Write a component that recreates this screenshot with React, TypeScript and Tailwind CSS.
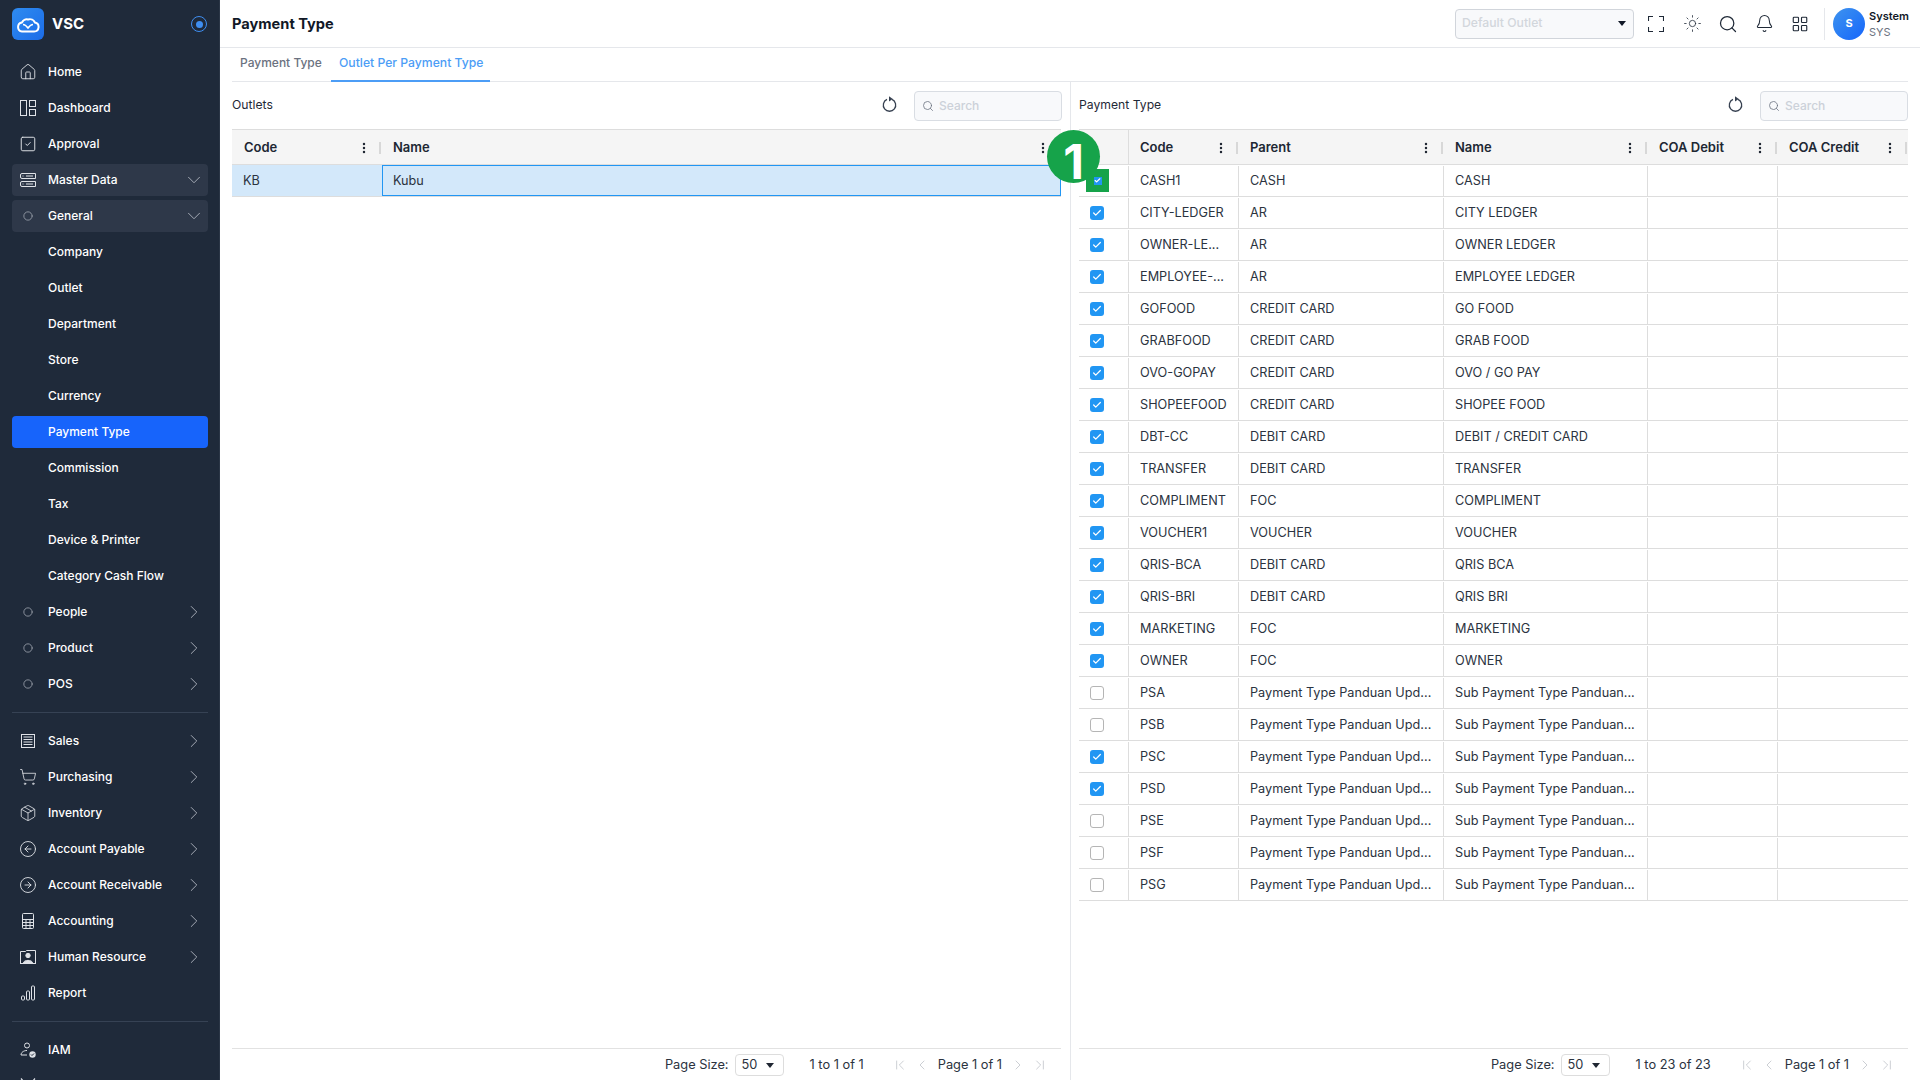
import {
  ChevronDown,
  ChevronRight,
  ChevronLeft,
  ChevronFirst,
  ChevronLast,
  Circle,
  Home,
  SquareCheck,
  ShoppingCart,
  Package,
  CircleArrowLeft,
  CircleArrowRight,
  Sun,
  Search,
  Bell,
  LayoutGrid,
  EllipsisVertical,
  Check,
} from "lucide-react";

const font = "font-['Inter','Liberation_Sans',sans-serif]";
const navIcon = "w-[18px] h-[18px] shrink-0";

function DashboardIcon() {
  return (
    <svg width="16" height="16" viewBox="0 0 16 16" fill="none" stroke="currentColor" strokeWidth="1">
      <rect x="0.5" y="0.5" width="6" height="15" />
      <rect x="9.5" y="0.5" width="6" height="6" />
      <rect x="9.5" y="9.5" width="6" height="6" />
    </svg>
  );
}

function ServerIcon() {
  return (
    <svg width="16" height="16" viewBox="0 0 16 16" fill="none" stroke="currentColor" strokeWidth="1">
      <path d="M2 1.500h13.500v5H2a1.500 1.500 0 0 1-1.500-1.500V3A1.500 1.500 0 0 1 2 1.500z" />
      <path d="M2 9.500h13.500v5H2A1.500 1.500 0 0 1 .5 13v-2A1.500 1.500 0 0 1 2 9.500z" />
      <path d="M2.500 4h1M2.500 12h1M6 4h7M6 12h7" />
    </svg>
  );
}

function SalesIcon() {
  return (
    <svg width="16" height="16" viewBox="0 0 16 16" fill="none" stroke="currentColor" strokeWidth="1">
      <rect x="1.500" y="1.500" width="13" height="13" />
      <path d="M3.500 4h9M3.500 6.500h9M3.500 9h9M3.500 11.500h9" />
    </svg>
  );
}

function CalcIcon() {
  return (
    <svg width="16" height="16" viewBox="0 0 16 16" fill="none" stroke="currentColor" strokeWidth="1">
      <rect x="2.500" y="0.500" width="11" height="15" rx="1" />
      <path d="M2.500 6.500h11M2.500 9.500h11M2.500 12.500h11M6 6.500v9M10 6.500v9" />
    </svg>
  );
}

function HrIcon() {
  return (
    <svg width="16" height="16" viewBox="0 0 16 16" fill="none" stroke="currentColor" strokeWidth="1">
      <path d="M.5 14.500v-12h5l1-1h9v13" />
      <path d="M0 14.500h16" />
      <circle cx="8" cy="6.500" r="2.200" fill="currentColor" />
      <path d="M3.500 14c0-3.500 9-3.500 9 0z" fill="currentColor" />
    </svg>
  );
}

function ReportIcon() {
  return (
    <svg width="16" height="16" viewBox="0 0 16 16" fill="none" stroke="currentColor" strokeWidth="1">
      <rect x="1.500" y="11" width="3" height="4" rx="1" />
      <rect x="6.500" y="6" width="3" height="9" rx="1" />
      <rect x="11.500" y="1" width="3" height="14" rx="1" />
    </svg>
  );
}

function IamIcon() {
  return (
    <svg width="16" height="16" viewBox="0 0 16 16" fill="none" stroke="currentColor" strokeWidth="1">
      <circle cx="7" cy="3.500" r="2.500" />
      <path d="M1 13h6M1 13c0-2.500 2.500-4.500 6-4.500" />
      <circle cx="12.500" cy="12.500" r="3.200" fill="currentColor" stroke="none" />
      <path d="M11 12.500l1 1 2-2" stroke="#1f2a3a" />
    </svg>
  );
}

function ToolsIcon() {
  return (
    <svg width="16" height="16" viewBox="0 0 16 16" fill="none" stroke="currentColor" strokeWidth="1.200">
      <path d="M1 .5l6 7M15 .5l-6 7M3 8l10 7M13 8L3 15" />
    </svg>
  );
}

function FullscreenIcon() {
  return (
    <svg width="16" height="16" viewBox="0 0 16 16" fill="none" stroke="currentColor" strokeWidth="1.100">
      <path d="M0.500 5V0.500H5M11 0.500H15.500V5M15.500 11V15.500H11M5 15.500H0.500V11" />
    </svg>
  );
}

function RefreshIcon() {
  return (
    <svg width="15" height="16" viewBox="0 0 15 16" fill="none" className="mr-[17px] -mt-[3px] shrink-0 text-[#374151]">
      <path d="M5 3.400a6.200 6.200 0 1 0 5 0" stroke="currentColor" strokeWidth="1.300" />
      <path d="M7 .2l3.800 2.700L7 5.400z" fill="currentColor" />
    </svg>
  );
}

function Logo() {
  return (
    <div className="w-8 h-8 rounded-md bg-gradient-to-br from-[#2f8bf0] to-[#1c6ce8] flex items-center justify-center shrink-0">
      <svg width="24" height="18" viewBox="0 0 24 18" fill="none" stroke="white" strokeWidth="2">
        <path d="M6 16.500h12a4.500 4.500 0 0 0 1-8.900A5.500 5.500 0 0 0 12 4.500 5 5 0 0 0 6 7.400a4.600 4.600 0 0 0 0 9.100z" />
        <path d="M7 9.500c2 0 3.500 1.500 5 3.500 1.500-2 3-3.500 5-3.500" strokeWidth="1.600" />
      </svg>
    </div>
  );
}

type NavItem = {
  label: string;
  icon?: React.ReactNode;
  arrow?: "down" | "right";
  active?: boolean;
  open?: boolean;
};

const ringIcon = <Circle className="w-[10px] h-[10px] text-[#9aa1ac]" strokeWidth={2} />;

const topItems: NavItem[] = [
  { label: "Home", icon: <Home className={navIcon} strokeWidth={1.2} /> },
  { label: "Dashboard", icon: <DashboardIcon /> },
  { label: "Approval", icon: <SquareCheck className={navIcon} strokeWidth={1.3} /> },
  { label: "Master Data", icon: <ServerIcon />, arrow: "down", open: true },
  { label: "General", icon: ringIcon, arrow: "down", open: true },
  { label: "Company" },
  { label: "Outlet" },
  { label: "Department" },
  { label: "Store" },
  { label: "Currency" },
  { label: "Payment Type", active: true },
  { label: "Commission" },
  { label: "Tax" },
  { label: "Device & Printer" },
  { label: "Category Cash Flow" },
  { label: "People", icon: ringIcon, arrow: "right" },
  { label: "Product", icon: ringIcon, arrow: "right" },
  { label: "POS", icon: ringIcon, arrow: "right" },
];

const midItems: NavItem[] = [
  { label: "Sales", icon: <SalesIcon />, arrow: "right" },
  { label: "Purchasing", icon: <ShoppingCart className={navIcon} strokeWidth={1.1} />, arrow: "right" },
  { label: "Inventory", icon: <Package className={navIcon} strokeWidth={1.1} />, arrow: "right" },
  { label: "Account Payable", icon: <CircleArrowLeft className={navIcon} strokeWidth={1.2} />, arrow: "right" },
  { label: "Account Receivable", icon: <CircleArrowRight className={navIcon} strokeWidth={1.2} />, arrow: "right" },
  { label: "Accounting", icon: <CalcIcon />, arrow: "right" },
  { label: "Human Resource", icon: <HrIcon />, arrow: "right" },
  { label: "Report", icon: <ReportIcon /> },
];

function NavRow({ item }: { item: NavItem }) {
  const bg = item.active ? "bg-[#1764fb]" : item.open ? "bg-[#2e3849]" : "";
  return (
    <div className={`h-8 shrink-0 rounded flex items-center pl-[8px] pr-[3px] text-white text-[12px] font-medium ${bg}`}>
      <span className="w-[16px] shrink-0 flex items-center justify-center text-[#dfe2e7]">{item.icon}</span>
      <span className="ml-[12px] flex-1 truncate">{item.label}</span>
      {item.arrow === "down" && <ChevronDown className="w-[22px] h-[22px] text-[#aeb3bd]" strokeWidth={1} />}
      {item.arrow === "right" && <ChevronRight className="w-[22px] h-[22px] text-[#aeb3bd]" strokeWidth={1} />}
    </div>
  );
}

function Sidebar() {
  return (
    <aside className="w-[220px] h-[1080px] shrink-0 bg-[#1f2a3a] overflow-hidden pl-3 pr-[11px] border-r border-[#2b3646]">
      <div className="h-12 flex items-center">
        <Logo />
        <span className="ml-2 text-white text-[15px] font-bold flex-1">VSC</span>
        <span className="w-4 h-4 rounded-full border border-[#3f8ef0] flex items-center justify-center mr-px">
          <span className="w-[7px] h-[7px] rounded-full bg-[#3f8ef0]" />
        </span>
      </div>
      <nav className="mt-2 flex flex-col gap-1">
        {topItems.map((item) => (
          <NavRow key={item.label} item={item} />
        ))}
        <div className="h-px bg-[#364254] my-[8px] shrink-0" />
        {midItems.map((item) => (
          <NavRow key={item.label} item={item} />
        ))}
        <div className="h-px bg-[#364254] my-[8px] shrink-0" />
        <NavRow item={{ label: "IAM", icon: <IamIcon /> }} />
        <NavRow item={{ label: "", icon: <ToolsIcon /> }} />
      </nav>
    </aside>
  );
}

function TopIcon({ children }: { children: React.ReactNode }) {
  return <span className="w-4 h-4 flex items-center justify-center">{children}</span>;
}

function Topbar() {
  return (
    <header className="h-12 shrink-0 border-b border-[#e5e7eb] flex items-center pl-3 pr-3">
      <h1 className="text-[14.6px] font-bold text-[#111827] flex-1 pt-[2px]">Payment Type</h1>
      <div className="w-[179px] h-[30px] rounded border border-[#d1d5db] bg-[#f8f9fb] flex items-center pl-[6px] pr-[7px] pb-px text-[12.2px] text-[#d2d6dc] font-medium">
        <span className="flex-1">Default Outlet</span>
        <span className="w-0 h-0 border-x-[4px] border-x-transparent border-t-[5px] border-t-[#111827]" />
      </div>
      <div className="ml-[14px] mr-[16px] flex items-center gap-[20px] text-[#1f2937]">
        <TopIcon>
          <FullscreenIcon />
        </TopIcon>
        <TopIcon>
          <Sun className="w-[19px] h-[19px] shrink-0" strokeWidth={1} />
        </TopIcon>
        <TopIcon>
          <Search className="w-[20px] h-[20px] shrink-0" strokeWidth={1.500} />
        </TopIcon>
        <TopIcon>
          <Bell className="w-[19px] h-[19px] shrink-0" strokeWidth={1.300} />
        </TopIcon>
        <TopIcon>
          <LayoutGrid className="w-[18px] h-[18px] shrink-0" strokeWidth={1.500} />
        </TopIcon>
      </div>
      <div className="w-px h-8 bg-[#e5e7eb]" />
      <div className="ml-2 w-8 h-8 rounded-full bg-gradient-to-br from-[#3f93ee] to-[#1764fb] text-white text-[11px] font-bold flex items-center justify-center">
        S
      </div>
      <div className="ml-[4px] w-[39px] leading-[16px]">
        <div className="text-[11px] font-semibold text-[#111827] whitespace-nowrap">System</div>
        <div className="text-[11px] text-[#6b7280]">SYS</div>
      </div>
    </header>
  );
}

function Tabs() {
  return (
    <div className="h-[34px] shrink-0 mx-3 border-b border-[#e5e7eb] flex font-medium whitespace-nowrap">
      <div className="w-[99px] px-2 pt-[6px] text-[12px] text-[#6b7280]">Payment Type</div>
      <div className="-mb-px w-[159px] px-2 pt-[6px] text-[12.2px] text-[#4c9df6] border-b-2 border-[#4c9df6]">Outlet Per Payment Type</div>
    </div>
  );
}

function SearchBox({ className }: { className: string }) {
  return (
    <div className={`h-[30px] rounded border border-[#d9dde3] bg-[#f8f9fb] flex items-center pl-[7px] text-[12px] text-[#ccd1d9] font-medium ${className}`}>
      <Search className="w-[12px] h-[12px] text-[#6b7280]" strokeWidth={1.600} />
      <span className="ml-[5px]">Search</span>
    </div>
  );
}

function PanelHead({ title, shift }: { title: string; shift?: boolean }) {
  return (
    <div className={`h-[47px] shrink-0 flex items-center ${shift ? "-mr-px" : ""}`}>
      <span className="text-[12.2px] text-[#1f2937] flex-1">{title}</span>
      <RefreshIcon />
      <SearchBox className="w-[148px]" />
    </div>
  );
}

function HeaderCell({ label, width }: { label: string; width: string }) {
  return (
    <div className={`h-full relative flex items-center pl-[11px] pt-[2px] text-[13px] font-semibold text-[#202733] shrink-0 ${width}`}>
      <span className="flex-1">{label}</span>
      <EllipsisVertical className="w-[14px] h-[14px] text-[#202733] mr-[11px]" strokeWidth={2.200} />
      <span className="absolute right-[1px] w-[2px] h-[12px] bg-[#d8d8d8]" />
    </div>
  );
}

function PageBar({ count }: { count: string }) {
  return (
    <div className="h-[32px] mt-auto shrink-0 border-t border-[#e2e2e2] flex items-center justify-end pt-px text-[12.8px] text-[#2b3340] whitespace-nowrap">
      <span>Page Size:</span>
      <div className="ml-[6px] w-[49px] h-[22px] rounded border border-[#dddddd] flex items-center pl-[6px] pr-[9px]">
        <span className="flex-1">50</span>
        <span className="w-0 h-0 border-x-[4px] border-x-transparent border-t-[5px] border-t-[#202733]" />
      </div>
      <span className="ml-[26px]">{count}</span>
      <div className="ml-[28px] flex items-center gap-[6px] text-[#b9bdc4]">
        <ChevronFirst className="w-4 h-4" strokeWidth={1.100} />
        <ChevronLeft className="w-4 h-4" strokeWidth={1.100} />
      </div>
      <span className="ml-[8px]">Page 1 of 1</span>
      <div className="ml-[8px] mr-[13px] flex items-center gap-[6px] text-[#b9bdc4]">
        <ChevronRight className="w-4 h-4" strokeWidth={1.100} />
        <ChevronLast className="w-4 h-4" strokeWidth={1.100} />
      </div>
    </div>
  );
}

const sub = "Sub Payment Type Panduan...";
const par = "Payment Type Panduan Upd...";

const rows = [
  { code: "CASH1", parent: "CASH", name: "CASH", on: true },
  { code: "CITY-LEDGER", parent: "AR", name: "CITY LEDGER", on: true },
  { code: "OWNER-LE...", parent: "AR", name: "OWNER LEDGER", on: true },
  { code: "EMPLOYEE-...", parent: "AR", name: "EMPLOYEE LEDGER", on: true },
  { code: "GOFOOD", parent: "CREDIT CARD", name: "GO FOOD", on: true },
  { code: "GRABFOOD", parent: "CREDIT CARD", name: "GRAB FOOD", on: true },
  { code: "OVO-GOPAY", parent: "CREDIT CARD", name: "OVO / GO PAY", on: true },
  { code: "SHOPEEFOOD", parent: "CREDIT CARD", name: "SHOPEE FOOD", on: true },
  { code: "DBT-CC", parent: "DEBIT CARD", name: "DEBIT / CREDIT CARD", on: true },
  { code: "TRANSFER", parent: "DEBIT CARD", name: "TRANSFER", on: true },
  { code: "COMPLIMENT", parent: "FOC", name: "COMPLIMENT", on: true },
  { code: "VOUCHER1", parent: "VOUCHER", name: "VOUCHER", on: true },
  { code: "QRIS-BCA", parent: "DEBIT CARD", name: "QRIS BCA", on: true },
  { code: "QRIS-BRI", parent: "DEBIT CARD", name: "QRIS BRI", on: true },
  { code: "MARKETING", parent: "FOC", name: "MARKETING", on: true },
  { code: "OWNER", parent: "FOC", name: "OWNER", on: true },
  { code: "PSA", parent: par, name: sub, on: false },
  { code: "PSB", parent: par, name: sub, on: false },
  { code: "PSC", parent: par, name: sub, on: true },
  { code: "PSD", parent: par, name: sub, on: true },
  { code: "PSE", parent: par, name: sub, on: false },
  { code: "PSF", parent: par, name: sub, on: false },
  { code: "PSG", parent: par, name: sub, on: false },
];

function CheckBox({ on }: { on: boolean }) {
  if (on) {
    return (
      <span className="w-[14px] h-[14px] rounded-[3px] bg-[#2196f3] flex items-center justify-center">
        <Check className="w-[10px] h-[10px] text-white" strokeWidth={3} />
      </span>
    );
  }
  return <span className="w-[14px] h-[14px] rounded-[3px] border border-[#b5b5b5] bg-white" />;
}

function BodyCell({ text, width }: { text?: string; width: string }) {
  return (
    <div className={`h-[30px] mt-px shrink-0 flex items-center pl-[10px] text-[12.7px] text-[#2b3340] border-l border-[#dddddd] ${width}`}>
      {text}
    </div>
  );
}

function OutletPanel() {
  return (
    <section className="w-[829px] shrink-0 flex flex-col h-full">
      <PanelHead title="Outlets" shift />
      <div className="h-[36px] shrink-0 bg-[#f5f5f5] border-y border-[#dddddd] flex items-center">
        <HeaderCell label="Code" width="w-[150px] !pl-[12px]" />
        <HeaderCell label="Name" width="flex-1 !shrink" />
      </div>
      <div className="h-[32px] shrink-0 bg-[#d3e8fa] border-b border-[#dddddd] flex items-center text-[12.7px] text-[#2b3340]">
        <div className="w-[150px] pl-[11px]">KB</div>
        <div className="flex-1 h-full pl-[10px] flex items-center border border-[#2196f3]">Kubu</div>
      </div>
      <PageBar count="1 to 1 of 1" />
    </section>
  );
}

function TypePanel() {
  return (
    <section className="flex-1 min-w-0 flex flex-col h-full">
      <PanelHead title="Payment Type" />
      <div className="h-[36px] shrink-0 bg-[#f5f5f5] border-y border-[#dddddd] flex items-center overflow-hidden">
        <div className="w-[50px] h-full shrink-0 border-r border-[#dddddd]" />
        <HeaderCell label="Code" width="w-[110px]" />
        <HeaderCell label="Parent" width="w-[205px]" />
        <HeaderCell label="Name" width="w-[204px]" />
        <HeaderCell label="COA Debit" width="w-[130px]" />
        <HeaderCell label="COA Credit" width="w-[130px]" />
      </div>
      {rows.map((r, i) => (
        <div key={r.code} className="h-[32px] shrink-0 border-b border-[#dddddd] flex items-start">
          <div className="w-[49px] shrink-0 h-full flex items-center pl-[11px]">
            {i === 0 ? (
              <span className="w-[23px] h-[23px] -ml-[4px] bg-[#16a34a] flex items-center justify-center">
                <span className="w-[8px] h-[8px] bg-[#2196f3] flex items-center justify-center">
                  <Check className="w-[7px] h-[7px] text-white" strokeWidth={4} />
                </span>
              </span>
            ) : (
              <CheckBox on={r.on} />
            )}
          </div>
          <BodyCell text={r.code} width="w-[110px] !pl-[11px]" />
          <BodyCell text={r.parent} width="w-[205px] !pl-[11px]" />
          <BodyCell text={r.name} width="w-[204px] !pl-[11px]" />
          <BodyCell width="w-[130px]" />
          <BodyCell width="w-[131px]" />
        </div>
      ))}
      <PageBar count="1 to 23 of 23" />
    </section>
  );
}

export default function App() {
  return (
    <div className={`w-[1920px] h-[1080px] flex overflow-hidden bg-white ${font}`}>
      <Sidebar />
      <main className="flex-1 min-w-0 flex flex-col">
        <Topbar />
        <Tabs />
        <div className="flex-1 min-h-0 flex pl-3 pr-3 relative">
          <OutletPanel />
          <div className="w-px bg-[#e5e7eb] ml-[9px] mr-[8px] shrink-0" />
          <TypePanel />
          <span className="absolute left-[827px] top-[48px] w-[53px] h-[53px] pt-[11px] rounded-full bg-[#16a34a] text-white text-[48px] font-bold flex items-center justify-center leading-none">
            1
          </span>
        </div>
      </main>
    </div>
  );
}
